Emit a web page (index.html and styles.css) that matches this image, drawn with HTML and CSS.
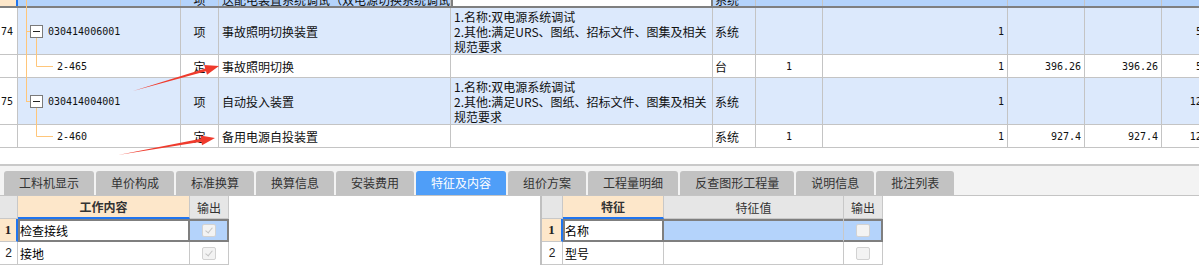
FILE: index.html
```html
<!DOCTYPE html>
<html lang="zh-CN">
<head>
  <meta charset="UTF-8">
  <title>分部分项</title>
  <link rel="stylesheet" href="styles.css">
</head>
<body>
  <div class="sheet">
    <div class="grid">
      <div class="row sel">
        <div class="c c0"></div>
        <div class="c c1"></div>
        <div class="c c2 mid">项</div>
        <div class="c c3">送配电装置系统调试（双电源切换系统调试）</div>
        <div class="c c4 focus"></div>
        <div class="c c5">系统</div>
        <div class="c c6"></div>
        <div class="c c7"></div>
        <div class="c c8"></div>
        <div class="c c9"></div>
        <div class="c c10"></div>
      </div>

      <div class="row item">
        <div class="c c0 idx">74</div>
        <div class="c c1 code"><span class="fold"></span>030414006001</div>
        <div class="c c2 mid">项</div>
        <div class="c c3">事故照明切换装置</div>
        <div class="c c4 feat">1.名称:双电源系统调试<br>2.其他:满足URS、图纸、招标文件、图集及相关<br>规范要求</div>
        <div class="c c5">系统</div>
        <div class="c c6 mid num"></div>
        <div class="c c7 num">1</div>
        <div class="c c8 num"></div>
        <div class="c c9 num"></div>
        <div class="c c10 num">513.83</div>
      </div>

      <div class="row sub">
        <div class="c c0"></div>
        <div class="c c1 code">2-465</div>
        <div class="c c2 mid">定</div>
        <div class="c c3">事故照明切换</div>
        <div class="c c4"></div>
        <div class="c c5">台</div>
        <div class="c c6 mid num">1</div>
        <div class="c c7 num">1</div>
        <div class="c c8 num">396.26</div>
        <div class="c c9 num">396.26</div>
        <div class="c c10 num">513.83</div>
      </div>

      <div class="row item">
        <div class="c c0 idx">75</div>
        <div class="c c1 code"><span class="fold"></span>030414004001</div>
        <div class="c c2 mid">项</div>
        <div class="c c3">自动投入装置</div>
        <div class="c c4 feat">1.名称:双电源系统调试<br>2.其他:满足URS、图纸、招标文件、图集及相关<br>规范要求</div>
        <div class="c c5">系统</div>
        <div class="c c6 mid num"></div>
        <div class="c c7 num">1</div>
        <div class="c c8 num"></div>
        <div class="c c9 num"></div>
        <div class="c c10 num">1201.62</div>
      </div>

      <div class="row sub">
        <div class="c c0"></div>
        <div class="c c1 code">2-460</div>
        <div class="c c2 mid">定</div>
        <div class="c c3">备用电源自投装置</div>
        <div class="c c4"></div>
        <div class="c c5">系统</div>
        <div class="c c6 mid num">1</div>
        <div class="c c7 num">1</div>
        <div class="c c8 num">927.4</div>
        <div class="c c9 num">927.4</div>
        <div class="c c10 num">1201.62</div>
      </div>
    </div>

    <!-- tree guides and the two red arrows drawn over the grid -->
    <svg class="marks" width="1199" height="164" viewBox="0 0 1199 164">
      <g stroke="#ffc67a" stroke-width="1" fill="none">
        <path d="M26.5 0V101.5M26 31.5H30M26 101.5H30"/>
        <path d="M36.5 38V66.5H53M36.5 108V136.5H53"/>
      </g>
      <g fill="#ef3b2d">
        <polygon points="133,91 206,71.3 207,74.7 219,66 204.2,65.1 205.2,68.5"/>
        <polygon points="118,155 201.4,141.8 202,145.2 215,138 200.4,135.4 201,138.8"/>
      </g>
    </svg>
  </div>

  <div class="sep"></div>

  <div class="tabs">
    <div class="tab">工料机显示</div>
    <div class="tab">单价构成</div>
    <div class="tab">标准换算</div>
    <div class="tab">换算信息</div>
    <div class="tab">安装费用</div>
    <div class="tab on">特征及内容</div>
    <div class="tab">组价方案</div>
    <div class="tab">工程量明细</div>
    <div class="tab">反查图形工程量</div>
    <div class="tab">说明信息</div>
    <div class="tab">批注列表</div>
  </div>

  <div class="panes">
    <div class="pane work">
      <div class="g-row">
        <div class="g rn head"></div>
        <div class="g w-content head key">工作内容</div>
        <div class="g w-out head">输出</div>
      </div>
      <div class="g-row">
        <div class="g rn cur">1</div>
        <div class="g w-content txt focus">检查接线</div>
        <div class="g w-out picked last"><span class="chk on"></span></div>
      </div>
      <div class="g-row">
        <div class="g rn">2</div>
        <div class="g w-content txt">接地</div>
        <div class="g w-out"><span class="chk on"></span></div>
      </div>
    </div>

    <div class="pane feats">
      <div class="g-row">
        <div class="g rn2 head"></div>
        <div class="g f-name head key">特征</div>
        <div class="g f-val head">特征值</div>
        <div class="g w-out head">输出</div>
      </div>
      <div class="g-row">
        <div class="g rn2 cur">1</div>
        <div class="g f-name txt focus">名称</div>
        <div class="g f-val picked"></div>
        <div class="g w-out picked last"><span class="chk"></span></div>
      </div>
      <div class="g-row">
        <div class="g rn2">2</div>
        <div class="g f-name txt">型号</div>
        <div class="g f-val"></div>
        <div class="g w-out"><span class="chk"></span></div>
      </div>
    </div>
  </div>
</body>
</html>
```

FILE: styles.css
```css
:root {
  --line: #c4c4c4;
  --row: #dce9fc;
  --picked: #b4d3fb;
  --peach: #fde7ca;
  --focus: #7f7f7f;
  --blue: #2075f0;
}

* {
  margin: 0;
  padding: 0;
  box-sizing: border-box;
}

body {
  width: 1199px;
  height: 265px;
  overflow: hidden;
  background: #fff;
  color: #111;
  font-family: "Noto Sans CJK SC", sans-serif;
  font-size: 12px;
}

/* upper grid */
.sheet {
  position: relative;
  height: 164px;
  overflow: hidden;
}

.row {
  display: flex;
  width: 1235px;
  border-bottom: 1px solid var(--line);
}

.c {
  flex: none;
  display: flex;
  align-items: center;
  padding: 0 3px;
  border-right: 1px solid var(--line);
  white-space: nowrap;
  overflow: hidden;
}

.c0 { width: 18px; background: #fff; padding: 0 1px; }
.c1 { width: 163px; }
.c2 { width: 38px; }
.c3 { width: 232px; }
.c4 { width: 262px; }
.c5 { width: 43px; padding-left: 2px; }
.c6 { width: 67px; }
.c7 { width: 185px; }
.c8 { width: 77px; }
.c9 { width: 77px; }
.c10 { width: 74px; }

.sel {
  height: 24px;
  margin-top: -16px;
  background: var(--picked);
  border-bottom: 2px solid var(--focus);
}

.sel .c {
  align-items: flex-end;
  line-height: 13px;
}

.sel .c0 {
  background: var(--peach);
  border-right: 2px solid var(--blue);
}

.sel .focus {
  background: #fff;
  box-shadow: inset 2px 0 0 var(--focus), inset -1px 0 0 var(--focus);
  border-right-color: var(--focus);
}

.item {
  height: 47px;
  background: var(--row);
}

.sub {
  height: 23px;
  background: #fff;
}

.mid { justify-content: center; }

.num {
  justify-content: flex-end;
  font-family: "DejaVu Sans Mono", monospace;
  font-size: 10px;
}

.c6.num { justify-content: center; }

.idx {
  font-family: "DejaVu Sans Mono", monospace;
  font-size: 10px;
}

.code {
  font-family: "DejaVu Sans Mono", monospace;
  font-size: 10px;
}

.sub .code { padding-left: 39px; }

.fold {
  position: relative;
  flex: none;
  width: 13px;
  height: 13px;
  margin: 0 5px 0 9px;
  border: 1px solid #7a7a7a;
  background: #fff;
}

.fold::after {
  content: "";
  position: absolute;
  left: 2px;
  right: 2px;
  top: 5px;
  height: 1px;
  background: #222;
}

.feat {
  white-space: normal;
  line-height: 15px;
}

.marks {
  position: absolute;
  left: 0;
  top: 0;
  pointer-events: none;
}

/* tab strip */
.sep {
  height: 2px;
  background: #c9c9c9;
}

.tabs {
  display: flex;
  gap: 2px;
  height: 30px;
  padding: 5px 0 0 4px;
  background: #f3f3f3;
  border-bottom: 1px solid var(--line);
}

.tab {
  padding: 0 15px;
  line-height: 24px;
  background: #c2c2c2;
  color: #333;
  border-radius: 3px 3px 0 0;
  white-space: nowrap;
}

.tab.on {
  background: #4f9ef8;
  color: #fff;
}

/* lower grids */
.panes {
  display: flex;
}

.feats {
  margin-left: 311px;
  border-left: 2px solid #c0c0c0;
}

.g-row {
  display: flex;
  height: 23px;
}

.g {
  flex: none;
  display: flex;
  align-items: center;
  justify-content: center;
  border-right: 1px solid #c8c8c8;
  border-bottom: 1px solid #c8c8c8;
}

.rn { width: 18px; }
.rn2 { width: 21px; }
.w-content { width: 172px; }
.w-out { width: 39px; }
.f-name { width: 101px; }
.f-val { width: 180px; }

.rn, .rn2 {
  font-family: "Liberation Sans", sans-serif;
  font-size: 12px;
  color: #222;
}

.head {
  background: #e6e6e6;
  color: #333;
  font-size: 12px;
}

.head.key {
  background: var(--peach);
  font-weight: bold;
  border-bottom: 2px solid var(--blue);
}

.rn.cur, .rn2.cur {
  background: var(--peach);
  border-right: 2px solid var(--blue);
  font-family: "Liberation Serif", serif;
  font-weight: bold;
  font-size: 13px;
}

.txt {
  justify-content: flex-start;
  padding-left: 2px;
  font-size: 12px;
  color: #000;
}

.focus.g {
  background: #fff;
  border-color: var(--focus);
  box-shadow: inset 2px 2px 0 var(--focus), inset -1px -1px 0 var(--focus);
}

.picked {
  background: var(--picked);
  border-bottom-color: var(--focus);
  box-shadow: inset 0 2px 0 var(--focus), inset 0 -1px 0 var(--focus);
}

.picked.last {
  border-right-color: var(--focus);
  box-shadow: inset 0 2px 0 var(--focus), inset 0 -1px 0 var(--focus), inset -1px 0 0 var(--focus);
}

.chk {
  position: relative;
  width: 14px;
  height: 13px;
  border: 1px solid #d2d2d2;
  border-radius: 2px;
  background: #f3f3f3;
}

.chk.on::after {
  content: "";
  position: absolute;
  left: 4px;
  top: 1px;
  width: 3px;
  height: 6px;
  border-right: 1.5px solid #c4c4c4;
  border-bottom: 1.5px solid #c4c4c4;
  transform: rotate(40deg);
}
```
